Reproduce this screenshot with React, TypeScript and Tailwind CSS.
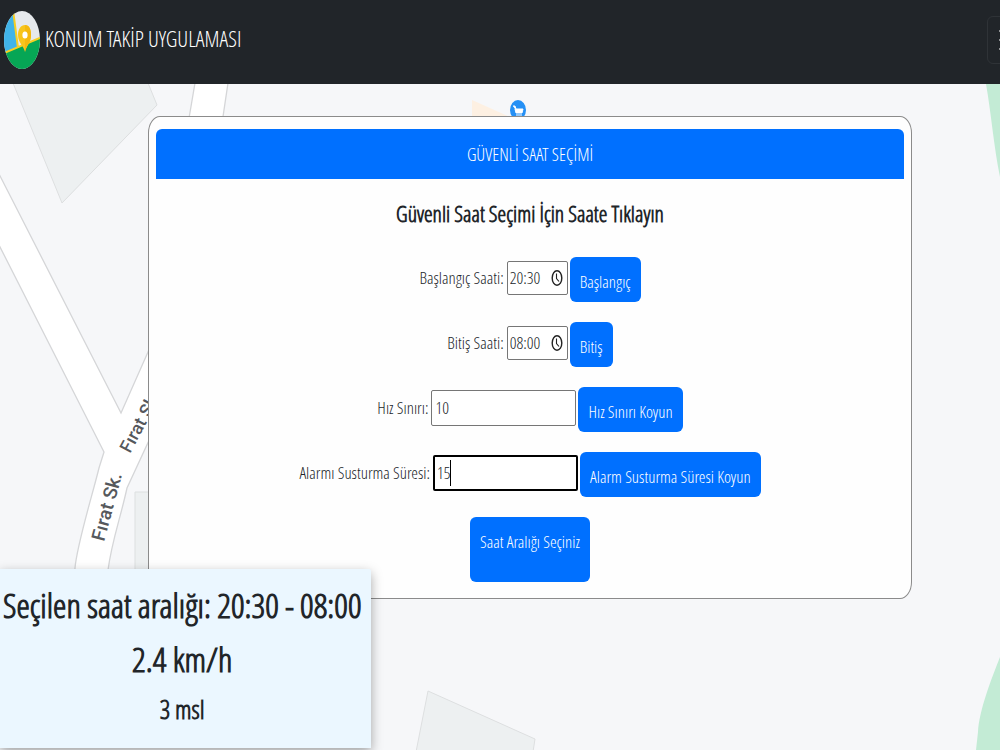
import React, { useState } from "react";

const ROWS = [
  { id: "start", label: "Başlangıç Saati:", button: "Başlangıç", time: true },
  { id: "end", label: "Bitiş Saati:", button: "Bitiş", time: true },
  { id: "speed", label: "Hız Sınırı:", button: "Hız Sınırı Koyun", time: false },
  { id: "mute", label: "Alarmı Susturma Süresi:", button: "Alarm Susturma Süresi Koyun", time: false },
];

const Logo: React.FC = () => (
  <svg className="h-[60px] w-[38px] shrink-0" viewBox="0 0 38 60" preserveAspectRatio="none" aria-hidden="true">
    <defs>
      <clipPath id="logo-clip">
        <ellipse cx="18" cy="30" rx="18" ry="29" />
      </clipPath>
    </defs>
    <g clipPath="url(#logo-clip)">
      <rect width="38" height="60" fill="#e6e9ec" />
      <path d="M0 0H9L14 38L0 44Z" fill="#40b4e9" />
      <path d="M0 43L38 27V60H0Z" fill="#06a655" />
      <path d="M9 0L14 38M0 43L38 27" fill="none" stroke="#f7cf23" strokeWidth="2" />
    </g>
    <path d="M21 42C20 36 14 33 14 25C14 19 17 15 21 15C25 15 27 19 27 25C27 33 22 36 21 42Z" fill="#f8c51c" />
    <path d="M21 15C25 15 27 19 27 25C27 33 22 36 21 42Z" fill="#f4b810" />
    <ellipse cx="21" cy="25" rx="2.6" ry="3.6" fill="#fff" />
  </svg>
);

const MapBackground: React.FC = () => (
  <svg
    className="absolute inset-0 h-full w-full"
    viewBox="0 84 1000 666"
    preserveAspectRatio="xMinYMin slice"
    aria-hidden="true"
  >
    <rect y="84" width="1000" height="666" fill="#f6f7f9" />
    <g fill="#edf0f1" stroke="#dddfe0" strokeWidth="1">
      <path d="M13 83L62 203L157 105L148 83Z" />
      <path d="M135 492H160V580H135Z" />
      <path d="M428 691L535 739L533 752H416Z" />
    </g>
    <path d="M986 84H1000V177C994 148 991 112 986 84Z" fill="#c3ebd5" />
    <path d="M1000 657C991 680 979 711 978 732L976 750H1000Z" fill="#c3ebd5" />
    <g fill="#fff" stroke="#d5d6d8" strokeWidth="1.3">
      <path d="M195 83L187 130H221L228 83Z" />
      <path d="M-2 172L121 413L148 352L170 300V395L127 488C120 520 112 540 108 570L106 600H72L75 568C77 544 93 493 99 468L104 452L-2 243Z" />
    </g>
    <path d="M472 100V118H512Z" fill="#fdf0e2" />
    <ellipse cx="518" cy="110" rx="8" ry="10" fill="#2590f5" />
    <path d="M513 106H515L516 109H523L522 113H516L515 109M516 115H522" fill="#fff" stroke="#fff" strokeWidth="1" />
    <g fill="#55585c" fontFamily="Roboto, sans-serif" fontSize="18" fontWeight="500">
      <text transform="translate(130 454) rotate(-62)">Fırat Sk.</text>
      <text transform="translate(104 542) rotate(-75)" fontSize="19">
        Fırat Sk.
      </text>
    </g>
  </svg>
);

const ClockIcon: React.FC = () => (
  <svg className="h-[18px] w-3" viewBox="0 0 12 18" fill="none" stroke="#222" aria-hidden="true">
    <ellipse cx="6" cy="9" rx="4.8" ry="7.3" strokeWidth="1.4" />
    <path d="M5.5 4.5V9.5L8 12.5" strokeWidth="1.1" />
  </svg>
);

const App: React.FC = () => {
  const [values, setValues] = useState<Record<string, string>>({
    start: "20:30",
    end: "08:00",
    speed: "10",
    mute: "15",
  });

  return (
    <div className="flex min-h-screen flex-col overflow-hidden bg-[#f6f7f9] font-['Open_Sans_Condensed_Light','Roboto_Condensed','Open_Sans',sans-serif] text-[#212529]">
      <header className="flex h-[84px] items-center justify-between bg-[#212529] pb-1 pl-1 text-white">
        <a href="#" className="flex items-center gap-[3px] text-[22px]">
          <Logo />
          <span className="pb-1">KONUM TAKİP UYGULAMASI</span>
        </a>
        <button
          aria-label="Menü"
          className="-mr-8 flex h-12 w-[45px] items-center rounded-md border border-[#2f3337] pl-[11px]"
        >
          <svg className="h-5 w-5" viewBox="0 0 20 20" stroke="#909294" strokeWidth="2" aria-hidden="true">
            <path d="M0 1H20M0 10H20M0 19H20" />
          </svg>
        </button>
      </header>

      <main className="relative grow pt-8">
        <MapBackground />

        <section className="relative mr-[88px] ml-[148px] rounded-[12px/17px] border border-[#8b8b8b] bg-[#fefefe] px-[7px] pt-3 pb-4 text-center">
          <h2 className="rounded-t-md bg-[#0070ff] text-lg leading-[50px] text-white">GÜVENLİ SAAT SEÇİMİ</h2>
          <h3 className="pt-[18px] text-[22px] leading-8 font-semibold">Güvenli Saat Seçimi İçin Saate Tıklayın</h3>

          <form className="flex flex-col items-center gap-5 pt-7 text-[17px]" onSubmit={(e) => e.preventDefault()}>
            {ROWS.map((row) => (
              <div key={row.id} className="flex items-center gap-[2px]">
                <label htmlFor={row.id} className="pr-px pb-1">
                  {row.label}
                </label>
                <div className="relative pb-1">
                  <input
                    id={row.id}
                    type="text"
                    value={values[row.id]}
                    onChange={(e) => setValues({ ...values, [row.id]: e.target.value })}
                    className={
                      row.time
                        ? "block h-[34px] w-[61px] rounded-xs border border-[#767676] bg-white pl-[2px] outline-none"
                        : row.id === "mute"
                          ? "block h-9 w-[145px] rounded-xs border-2 border-black bg-white pl-[2px] outline-none"
                          : "block h-9 w-[145px] rounded-xs border border-[#767676] bg-white pl-[3px] outline-none"
                    }
                  />
                  {row.time && (
                    <span className="pointer-events-none absolute top-2 right-[5px]">
                      <ClockIcon />
                    </span>
                  )}
                  {row.id === "mute" && <span className="absolute top-[5px] left-[17px] h-[26px] w-px bg-black" />}
                </div>
                <button className="h-[45px] rounded-md bg-[#0070ff] px-[10px] pt-1 whitespace-nowrap text-white">
                  {row.button}
                </button>
              </div>
            ))}
            <button className="h-[65px] rounded-md bg-[#0070ff] px-[10px] pb-4 text-white">Saat Aralığı Seçiniz</button>
          </form>
        </section>

        <aside className="absolute bottom-[2px] left-0 h-[179px] rounded-tr-xs bg-[#ebf7ff] pr-[10px] pl-[3px] text-center font-semibold shadow-[0_4px_12px_rgba(0,0,0,0.35)]">
          <p className="pt-[10px] text-[34px] leading-[52px]">Seçilen saat aralığı: 20:30 - 08:00</p>
          <p className="text-[34px] leading-[56px]">2.4 km/h</p>
          <p className="text-[26px] leading-[44px]">3 msl</p>
        </aside>
      </main>
    </div>
  );
};

export default App;
